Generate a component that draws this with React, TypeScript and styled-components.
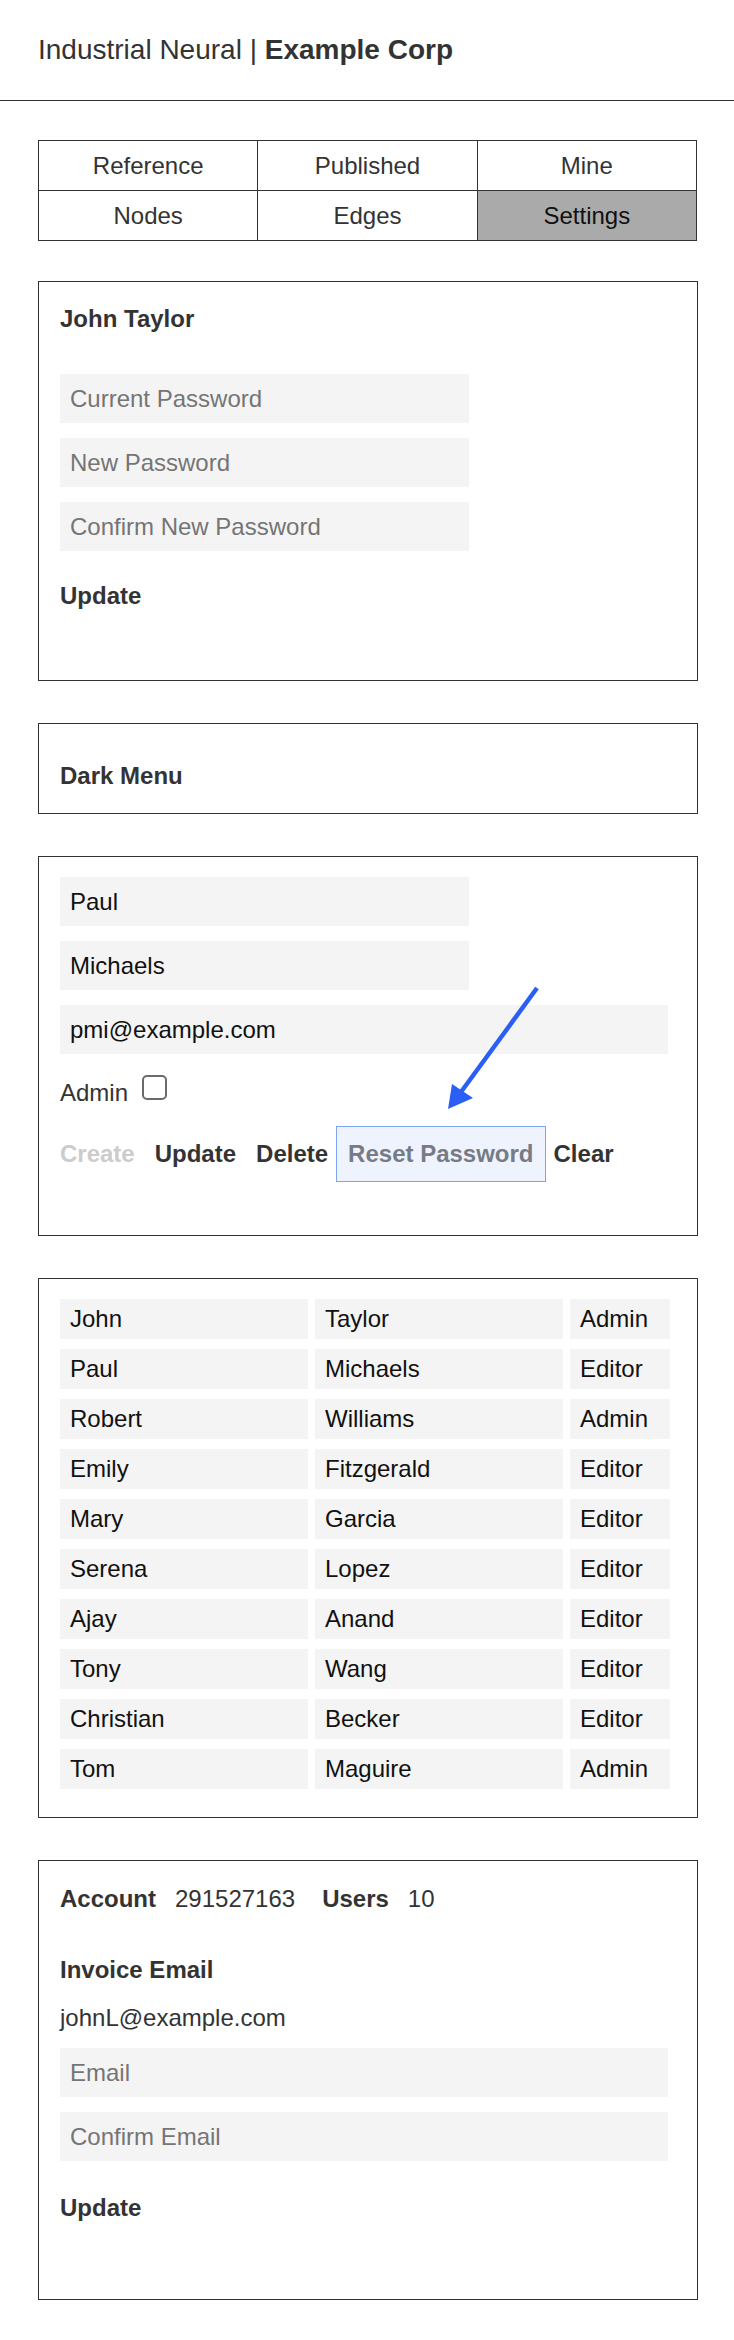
import React, { useState } from "react";
import styled, { createGlobalStyle } from "styled-components";

const GlobalStyle = createGlobalStyle`
    html, body {
        margin: 0;
        padding: 0;
        background: #ffffff;
    }
    body {
        font-family: "Liberation Sans", Arial, Helvetica, sans-serif;
        color: #333333;
    }
    * {
        box-sizing: border-box;
    }
`;

const Header = styled.header`
    height: 101px;
    display: flex;
    align-items: center;
    padding: 0 38px;
    border-bottom: 1px solid #333333;
    font-size: 28px;
    line-height: 32px;
    color: #333333;
    b {
        font-weight: 700;
    }
`;

const Main = styled.main`
    padding: 39px 36px 40px 38px;
    display: flex;
    flex-direction: column;
`;

const Tabs = styled.nav`
    width: 659px;
    display: grid;
    grid-template-columns: repeat(3, 1fr);
    border-top: 1px solid #333333;
    border-left: 1px solid #333333;
    margin-bottom: 40px;
`;

const Tab = styled.div<{ $active?: boolean }>`
    height: 50px;
    display: flex;
    align-items: center;
    justify-content: center;
    border-right: 1px solid #333333;
    border-bottom: 1px solid #333333;
    font-size: 24px;
    color: ${(p) => (p.$active ? "#111111" : "#333333")};
    background: ${(p) => (p.$active ? "#aaaaaa" : "#ffffff")};
    cursor: pointer;
`;

const Panel = styled.section<{ $pt: number; $pb: number }>`
    position: relative;
    border: 1px solid #333333;
    padding: ${(p) => p.$pt}px 20px ${(p) => p.$pb}px 21px;
    margin-bottom: 42px;
    display: flex;
    flex-direction: column;
    align-items: flex-start;
`;

const Heading = styled.h3<{ $mt?: number }>`
    margin: ${(p) => p.$mt || 0}px 0 0;
    font-size: 24px;
    line-height: 28px;
    font-weight: 700;
    color: #333333;
`;

const Fields = styled.div<{ $mt: number }>`
    margin-top: ${(p) => p.$mt}px;
    display: flex;
    flex-direction: column;
    gap: 15px;
`;

const Input = styled.input<{ $wide?: boolean }>`
    width: ${(p) => (p.$wide ? "608px" : "409px")};
    height: 49px;
    border: none;
    background: #f4f4f4;
    padding: 0 10px;
    font-family: inherit;
    font-size: 24px;
    color: #111111;
    outline: none;
    &::placeholder {
        color: #757575;
    }
`;

const LinkButton = styled.button<{ $mt: number }>`
    margin-top: ${(p) => p.$mt}px;
    padding: 0;
    border: none;
    background: none;
    font-family: inherit;
    font-size: 24px;
    line-height: 28px;
    font-weight: 700;
    color: #333333;
    cursor: pointer;
`;

const CheckRow = styled.label`
    margin-top: 25px;
    display: flex;
    align-items: flex-start;
    gap: 14px;
    font-size: 24px;
    line-height: 28px;
    color: #333333;
`;

const Checkbox = styled.input`
    appearance: none;
    margin: -4px 0 0;
    width: 25px;
    height: 25px;
    border: 2px solid #6b6b6b;
    border-radius: 5px;
    background: #ffffff;
`;

const ActionRow = styled.div`
    margin: 19px 0 0 -12px;
    display: flex;
    align-items: center;
`;

const Action = styled.button<{ $disabled?: boolean; $focused?: boolean }>`
    padding: 13px 11px;
    border: ${(p) => (p.$focused ? "1.5px solid #7ca3f5" : "1px solid transparent")};
    background: ${(p) => (p.$focused ? "#eef3fe" : "transparent")};
    font-family: inherit;
    font-size: 24px;
    line-height: 28px;
    font-weight: 700;
    color: ${(p) => (p.$disabled ? "#cccccc" : p.$focused ? "#767b85" : "#333333")};
    cursor: pointer;
    & + & {
        margin-left: -4px;
    }
`;

const Arrow = styled.svg`
    position: absolute;
    left: 399px;
    top: 124px;
    pointer-events: none;
`;

const UserGrid = styled.div`
    display: grid;
    grid-template-columns: 248px 248px 100px;
    column-gap: 7px;
    row-gap: 10px;
`;

const Cell = styled.div`
    height: 40px;
    display: flex;
    align-items: center;
    padding: 0 10px;
    background: #f4f4f4;
    font-size: 24px;
    color: #111111;
`;

const InfoRow = styled.div`
    display: flex;
    align-items: center;
    font-size: 24px;
    line-height: 28px;
    color: #333333;
`;

const InfoLabel = styled.b`
    font-weight: 700;
    margin-right: 19px;
`;

const InfoValue = styled.span`
    margin-right: 27px;
`;

const Text = styled.p<{ $mt: number }>`
    margin: ${(p) => p.$mt}px 0 0;
    font-size: 24px;
    line-height: 28px;
    color: #333333;
`;

const tabs = ["Reference", "Published", "Mine", "Nodes", "Edges", "Settings"];

const users = [
    ["John", "Taylor", "Admin"],
    ["Paul", "Michaels", "Editor"],
    ["Robert", "Williams", "Admin"],
    ["Emily", "Fitzgerald", "Editor"],
    ["Mary", "Garcia", "Editor"],
    ["Serena", "Lopez", "Editor"],
    ["Ajay", "Anand", "Editor"],
    ["Tony", "Wang", "Editor"],
    ["Christian", "Becker", "Editor"],
    ["Tom", "Maguire", "Admin"],
];

export default function App() {
    const [tab, setTab] = useState("Settings");
    const [first, setFirst] = useState("Paul");
    const [last, setLast] = useState("Michaels");
    const [email, setEmail] = useState("pmi@example.com");

    return (
        <>
            <GlobalStyle />
            <Header>
                <span>
                    Industrial Neural | <b>Example Corp</b>
                </span>
            </Header>
            <Main>
                <Tabs>
                    {tabs.map((t) => (
                        <Tab key={t} $active={t === tab} onClick={() => setTab(t)}>
                            {t}
                        </Tab>
                    ))}
                </Tabs>

                {/* password change */}
                <Panel $pt={23} $pb={70}>
                    <Heading>John Taylor</Heading>
                    <Fields $mt={41}>
                        <Input type="password" placeholder="Current Password" />
                        <Input type="password" placeholder="New Password" />
                        <Input type="password" placeholder="Confirm New Password" />
                    </Fields>
                    <LinkButton $mt={31}>Update</LinkButton>
                </Panel>

                <Panel $pt={38} $pb={23}>
                    <Heading>Dark Menu</Heading>
                </Panel>

                {/* user editor */}
                <Panel $pt={20} $pb={53}>
                    <Fields $mt={0}>
                        <Input value={first} onChange={(e) => setFirst(e.target.value)} />
                        <Input value={last} onChange={(e) => setLast(e.target.value)} />
                        <Input $wide value={email} onChange={(e) => setEmail(e.target.value)} />
                    </Fields>
                    <CheckRow>
                        Admin
                        <Checkbox type="checkbox" />
                    </CheckRow>
                    <ActionRow>
                        <Action $disabled>Create</Action>
                        <Action>Update</Action>
                        <Action>Delete</Action>
                        <Action $focused>Reset Password</Action>
                        <Action>Clear</Action>
                    </ActionRow>
                    <Arrow width="110" height="135" viewBox="0 0 110 135">
                        <line x1="99" y1="7" x2="23" y2="111" stroke="#2a5ef5" strokeWidth="4.5" />
                        <polygon points="10,128 14,103 35,117" fill="#2a5ef5" />
                    </Arrow>
                </Panel>

                {/* user list */}
                <Panel $pt={20} $pb={28}>
                    <UserGrid>
                        {users.map((u) =>
                            u.map((v, i) => <Cell key={u[0] + i}>{v}</Cell>)
                        )}
                    </UserGrid>
                </Panel>

                {/* account */}
                <Panel $pt={24} $pb={77}>
                    <InfoRow>
                        <InfoLabel>Account</InfoLabel>
                        <InfoValue>291527163</InfoValue>
                        <InfoLabel>Users</InfoLabel>
                        <InfoValue>10</InfoValue>
                    </InfoRow>
                    <Heading $mt={43}>Invoice Email</Heading>
                    <Text $mt={20}>johnL@example.com</Text>
                    <Fields $mt={16}>
                        <Input $wide placeholder="Email" />
                        <Input $wide placeholder="Confirm Email" />
                    </Fields>
                    <LinkButton $mt={33}>Update</LinkButton>
                </Panel>
            </Main>
        </>
    );
}
